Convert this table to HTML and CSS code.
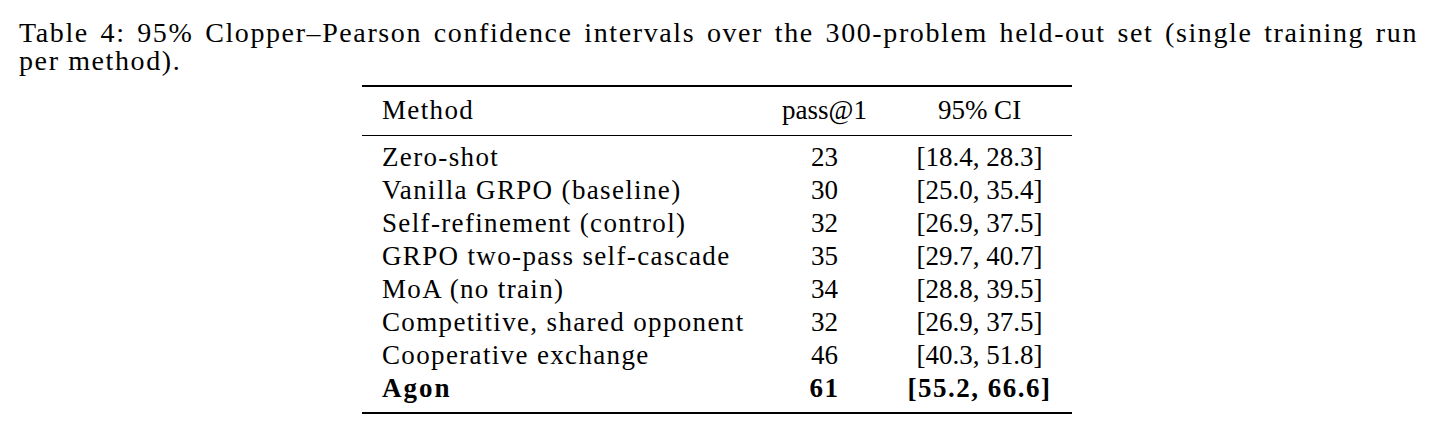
FILE: index.html
```html
<!DOCTYPE html>
<html>
<head>
<meta charset="utf-8">
<link rel="stylesheet" href="styles.css">
</head>
<body>
<div class="caption">
  <div class="cap-line cap-first">Table 4: 95% Clopper–Pearson confidence intervals over the 300-problem held-out set (single training run</div>
  <div class="cap-line">per method).</div>
</div>
<div class="tbl">
  <div class="thead">
    <div class="row">
      <div class="c1">Method</div>
      <div class="c2">pass@1</div>
      <div class="c3">95% CI</div>
    </div>
  </div>
  <div class="tbody">
    <div class="row"><div class="c1">Zero-shot</div><div class="c2">23</div><div class="c3">[18.4, 28.3]</div></div>
    <div class="row"><div class="c1">Vanilla GRPO (baseline)</div><div class="c2">30</div><div class="c3">[25.0, 35.4]</div></div>
    <div class="row"><div class="c1">Self-refinement (control)</div><div class="c2">32</div><div class="c3">[26.9, 37.5]</div></div>
    <div class="row"><div class="c1">GRPO two-pass self-cascade</div><div class="c2">35</div><div class="c3">[29.7, 40.7]</div></div>
    <div class="row"><div class="c1">MoA (no train)</div><div class="c2">34</div><div class="c3">[28.8, 39.5]</div></div>
    <div class="row"><div class="c1">Competitive, shared opponent</div><div class="c2">32</div><div class="c3">[26.9, 37.5]</div></div>
    <div class="row"><div class="c1">Cooperative exchange</div><div class="c2">46</div><div class="c3">[40.3, 51.8]</div></div>
    <div class="row best"><div class="c1">Agon</div><div class="c2">61</div><div class="c3">[55.2, 66.6]</div></div>
  </div>
</div>
</body>
</html>
```

FILE: styles.css
```css
html, body {
  margin: 0;
  padding: 0;
  background: #ffffff;
}
body {
  font-family: "Liberation Serif", "Times New Roman", serif;
  font-size: 27px;
  color: #000000;
  width: 1434px;
  height: 433px;
  overflow: hidden;
}
.caption {
  padding: 19px 0 0 19px;
  width: 1399px;
  font-size: 28px;
}
.cap-line {
  line-height: 28px;
  letter-spacing: 1.6px;
  white-space: nowrap;
}
.cap-first {
  white-space: normal;
  text-align: justify;
  text-align-last: justify;
}
.tbl {
  width: 710px;
  margin: 10px auto 0 auto;
  border-top: 2px solid #000;
  border-bottom: 2px solid #000;
}
.thead {
  padding: 7px 0 8px 0;
  border-bottom: 1px solid #000;
}
.tbody {
  padding: 5px 0 7px 0;
}
.row {
  display: grid;
  grid-template-columns: 400px 125px 185px;
  line-height: 33px;
  white-space: nowrap;
}
.c1 {
  padding-left: 20px;
  letter-spacing: 1.35px;
}
.c2, .c3 {
  text-align: center;
}
.best {
  font-weight: bold;
}
.best .c1 {
  letter-spacing: 2px;
}
.best .c2, .best .c3 {
  letter-spacing: 1.5px;
}
```
